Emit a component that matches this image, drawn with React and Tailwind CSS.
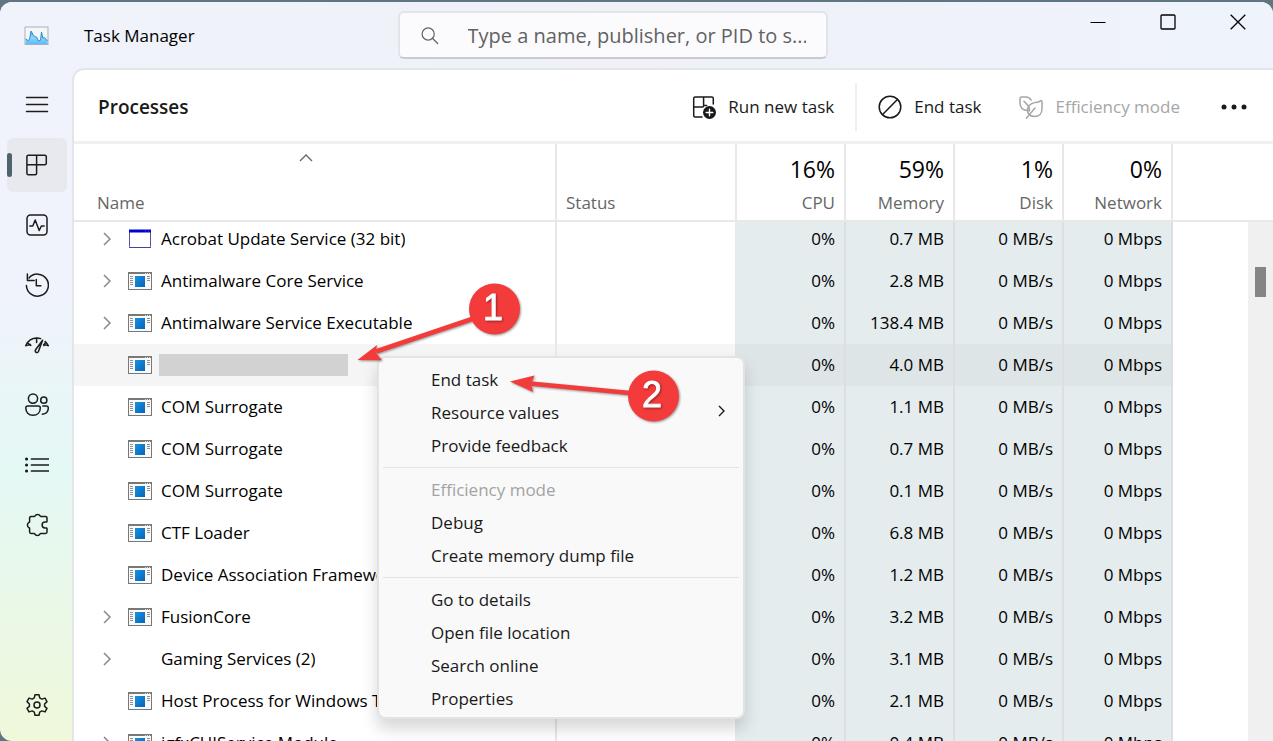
import React, { useState } from 'react';
import { clsx } from 'clsx';

const processes = [
  { name: 'Acrobat Update Service (32 bit)', icon: 'window', group: true, memory: '0.7 MB' },
  { name: 'Antimalware Core Service', icon: 'app', group: true, memory: '2.8 MB' },
  { name: 'Antimalware Service Executable', icon: 'app', group: true, memory: '138.4 MB' },
  { name: '', icon: 'app', memory: '4.0 MB', selected: true },
  { name: 'COM Surrogate', icon: 'app', memory: '1.1 MB' },
  { name: 'COM Surrogate', icon: 'app', memory: '0.7 MB' },
  { name: 'COM Surrogate', icon: 'app', memory: '0.1 MB' },
  { name: 'CTF Loader', icon: 'app', memory: '6.8 MB' },
  { name: 'Device Association Framework', icon: 'app', memory: '1.2 MB' },
  { name: 'FusionCore', icon: 'app', group: true, memory: '3.2 MB' },
  { name: 'Gaming Services (2)', icon: 'none', group: true, memory: '3.1 MB' },
  { name: 'Host Process for Windows Tasks', icon: 'app', memory: '2.1 MB' },
  { name: 'igfxCUIService Module', icon: 'app', group: true, memory: '0.4 MB' },
];

const usage = [
  { label: 'CPU', value: '16%' },
  { label: 'Memory', value: '59%' },
  { label: 'Disk', value: '1%' },
  { label: 'Network', value: '0%' },
];

const menuGroups = [
  [{ label: 'End task' }, { label: 'Resource values', submenu: true }, { label: 'Provide feedback' }],
  [{ label: 'Efficiency mode', disabled: true }, { label: 'Debug' }, { label: 'Create memory dump file' }],
  [{ label: 'Go to details' }, { label: 'Open file location' }, { label: 'Search online' }, { label: 'Properties' }],
];

const Icon = ({ children, size = 24, className }) => (
  <svg
    width={size}
    height={size}
    viewBox="0 0 24 24"
    fill="none"
    stroke="currentColor"
    strokeWidth="1.5"
    strokeLinecap="round"
    strokeLinejoin="round"
    aria-hidden="true"
    className={clsx('shrink-0', className)}
  >
    {children}
  </svg>
);

const navItems = [
  {
    label: 'Processes',
    icon: (
      <path d="M3.2 2.2h16.6a1.5 1.5 0 0 1 1.5 1.5v6.6a1.5 1.5 0 0 1-1.5 1.5H1.9M11.6 2.2v18a1.5 1.5 0 0 1-1.5 1.5H3.4a1.5 1.5 0 0 1-1.5-1.5V3.7a1.5 1.5 0 0 1 1.5-1.5" />
    ),
  },
  {
    label: 'Performance',
    icon: (
      <>
        <rect x="2" y="2" width="20" height="20" rx="3.5" />
        <path d="M4.8 13h3l2.4-6 4 10.5 2.2-4.5h2.8" />
      </>
    ),
  },
  {
    label: 'App history',
    icon: (
      <>
        <path d="M1.4 12.5A11 11 0 1 0 4 5" />
        <path d="M2.4 1v6.6h6.8M11.3 6.4v6.4h4.6" />
      </>
    ),
  },
  {
    label: 'Startup apps',
    icon: (
      <>
        <path d="M.8 12.6C2.8 8 7 5 12 5c1.4 0 2.4.2 3.6.6M20.2 8.6c1.2 1.1 2.2 2.4 3 4" />
        <path d="M1 12.6l4.4-1.2M2.6 10l3.2 2.4M11.6 5.2v4.4M23 12.6l-4.4-1.2M20.4 9.6l-1.6 3" />
        <path d="M17.6 7.2l-7 9.6c-1.4 2 1.5 4 2.8 1.8z" />
      </>
    ),
  },
  {
    label: 'Users',
    icon: (
      <>
        <circle cx="8" cy="5.6" r="4.6" />
        <circle cx="18.8" cy="7.2" r="3.1" />
        <path d="M2.7 13h10.6c1.3 0 2 .8 2 2 0 4.2-2.8 7.3-7.3 7.3S.8 19.2.8 15c0-1.2.7-2 1.9-2z" />
        <path d="M17.8 13h3.6c1.2 0 1.9.8 1.9 1.9 0 3.7-2.3 5.9-6 6.3" />
      </>
    ),
  },
  {
    label: 'Details',
    icon: (
      <>
        <path d="M6.5 6H23.4M6.5 12H23.4M6.5 18H23.4" strokeWidth="1.7" />
        <path d="M1.5 6h.1M1.5 12h.1M1.5 18h.1" strokeWidth="3" />
      </>
    ),
  },
  {
    label: 'Services',
    icon: (
      <path d="M6 3.600h3.200c.3 0 .6-.2.7-.5a3 3 0 0 1 5.400 0c.1.3.4.5.7.5h4.600a1.400 1.400 0 0 1 1.400 1.400v3.400c0 .4-.3.7-.7.7h-1.300a2.900 2.900 0 0 0 0 5.800h1.300c.4 0 .7.3.7.7V19a1.400 1.400 0 0 1-1.400 1.400h-4.800c-.3 0-.6.2-.7.5a3 3 0 0 1-5.400 0c-.1-.3-.4-.5-.7-.5H6A1.400 1.400 0 0 1 4.600 19v-3.500c0-.3-.2-.6-.5-.7a3 3 0 0 1 0-5.400c.3-.1.5-.4.5-.7V5A1.400 1.400 0 0 1 6 3.600z" />
    ),
  },
];

const AppIcon = () => (
  <svg width="24" height="18" viewBox="0 0 24 18" aria-hidden="true" className="block">
    <defs>
      <linearGradient id="appBlue" x1="0" y1="0" x2="1" y2="1">
        <stop offset="0" stopColor="#1993e0" />
        <stop offset="1" stopColor="#0563b8" />
      </linearGradient>
    </defs>
    <rect x=".5" y=".5" width="23" height="17" fill="#fafafa" stroke="#787878" />
    <path d="M0 1h24" stroke="#787874" strokeWidth="2" />
    <path d="M17 1.500h1M19 1.500h1M21 1.500h1" stroke="#ddd" />
    <rect x="7" y="4" width="10" height="11" fill="url(#appBlue)" />
    <path d="M2 4.500h3M2 6.500h3M2 8.500h3M2 10.500h3M2 12.500h3M19 4.500h3M19 6.500h3M19 8.500h3" stroke="#8f8f8f" />
  </svg>
);

const WindowIcon = () => (
  <svg width="24" height="20" viewBox="0 0 24 20" aria-hidden="true" className="block">
    <rect x="1.5" y="1.5" width="21" height="17" rx="1" fill="#fff" stroke="#5552a8" />
    <path d="M1 18.500h22" stroke="#45459a" />
    <path d="M1 2h22" stroke="#0202c8" strokeWidth="3" />
    <path d="M17 2h1M20 2h1" stroke="#3a4cff" />
  </svg>
);

const NavButton = ({ label, active, onClick, children }) => (
  <button
    type="button"
    aria-label={label}
    onClick={onClick}
    className={clsx(
      'relative flex h-[54px] w-[60px] items-center justify-center rounded-md text-[#1c1c1c]',
      active ? 'bg-[#e8e9ee]' : 'hover:bg-black/5'
    )}
  >
    {active && <span className="absolute left-0 h-6 w-[5px] rounded-full bg-[#4f626e]" />}
    {children}
  </button>
);

const TitleBar = () => (
  <header className="flex h-[66px] shrink-0 items-center bg-linear-to-r from-[#f0f3fb] via-[#eff1f7] to-[#eff3fc]">
    <div className="flex flex-1 items-center gap-[35px] pt-0.5 pl-6">
      <svg width="25" height="20" viewBox="0 0 25 20" aria-hidden="true">
        <defs>
          <linearGradient id="chartBlue" x1="0" y1="0" x2="0" y2="1">
            <stop offset="0" stopColor="#3d9fe0" />
            <stop offset=".5" stopColor="#8fd4fb" />
            <stop offset="1" stopColor="#5cbcf8" />
          </linearGradient>
        </defs>
        <rect x="1" y="1" width="23" height="17.5" fill="#f4f6f8" stroke="#a9b1b8" />
        <path
          d="M1.500 13l2.500 1.500 1.500-1L7 5l2 3.500 1.500 2 2 .5 2 4 2-.8L17.500 6l1.300 6 1.700-.5 3 3.500v3h-22z"
          fill="url(#chartBlue)"
        />
        <path
          d="M1.500 13l2.500 1.500 1.500-1L7 5l2 3.500 1.500 2 2 .5 2 4 2-.8L17.500 6l1.300 6 1.700-.5 3 3.500"
          fill="none"
          stroke="#2f90d8"
        />
      </svg>
      <span className="text-[17px]">Task Manager</span>
    </div>

    <label className="mr-[72px] flex h-12 w-[430px] items-center rounded-md border-2 border-[#e2e4ea] border-b-[#c9cbd1] bg-[#fbfbfe] pt-0.5 pr-5 pl-5">
      <Icon size={20} className="text-[#666]">
        <circle cx="9.8" cy="9.6" r="7.3" />
        <path d="M15.200 15l6 6" />
      </Icon>
      <input
        type="text"
        aria-label="Search processes"
        placeholder="Type a name, publisher, or PID to s..."
        className="ml-7 min-w-0 flex-1 bg-transparent text-[20px] outline-none placeholder:text-[#626262]"
      />
    </label>

    <div className="flex flex-1 justify-end self-start">
      <button type="button" aria-label="Minimize" className="flex h-10 w-[70px] items-center justify-center">
        <svg width="16" height="16" viewBox="0 0 16 16" stroke="#000">
          <path d="M.5 8.500h15" />
        </svg>
      </button>
      <button type="button" aria-label="Maximize" className="flex h-10 w-[70px] items-center justify-center">
        <svg width="16" height="16" viewBox="0 0 16 16" fill="none" stroke="#000" strokeWidth="1.3">
          <rect x="1" y="1" width="14" height="14" rx="1" />
        </svg>
      </button>
      <button type="button" aria-label="Close" className="flex h-10 w-[70px] items-center justify-center">
        <svg width="16" height="16" viewBox="0 0 16 16" stroke="#000" strokeWidth="1.3">
          <path d="M.7.7l14.600 14.600M15.300.7L.7 15.300" />
        </svg>
      </button>
    </div>
  </header>
);

const Toolbar = () => (
  <div className="flex h-[74px] shrink-0 items-center border-b-3 border-[#f0f0f1] pt-0.5 pr-[23px] pl-6">
    <h1 className="flex-1 pt-0.5 text-[19px] font-semibold text-[#1a1a1a]">Processes</h1>
    <button type="button" className="flex items-center gap-3 text-[17px] text-[#1a1a1a]">
      <Icon>
        <path d="M10 22H3.200a1.500 1.500 0 0 1-1.500-1.500v-17A1.500 1.500 0 0 1 3.200 2h16.600a1.500 1.500 0 0 1 1.500 1.500V9M1.700 12h8.600a1.300 1.300 0 0 0 1.300-1.300V2M11.600 10.500h3" />
        <circle cx="17.5" cy="17.5" r="6.5" fill="currentColor" stroke="none" />
        <path d="M17.500 14.200v6.600M14.200 17.500h6.600" stroke="#fff" strokeWidth="1.4" />
      </Icon>
      Run new task
    </button>
    <span className="mx-[21px] h-12 w-0.5 bg-[#efefef]" />
    <button type="button" className="flex items-center gap-3 text-[17px] text-[#1a1a1a]">
      <Icon>
        <circle cx="12" cy="12" r="10.8" />
        <path d="M4.600 19.600L19.400 4.400" />
      </Icon>
      End task
    </button>
    <button type="button" disabled className="ml-[38px] flex items-center gap-3 text-[17px] text-[#a6a6a6]">
      <Icon>
        <path d="M9 15.500C4 15.500 1 12.500 1 7.500V3.600C1 2.700 1.600 2 2.600 2h4.200c2.500 0 4.300 1.200 5.400 3.200M5 6.200l4 4.400c1.500 1.600 1.700 3 1.300 5.400" />
        <path d="M10.300 20c-2.200-2.600-2.200-6.300-.4-9C12 8 15 7.400 18.500 7.200c1.400-.1 2-.5 2.800-1.300.8-.7 1.700-.3 1.700.7v6.900c0 5-2.900 8-7.200 8-2.200 0-4.100-.7-5.500-1.500zM7.400 23.200L16 13" />
      </Icon>
      Efficiency mode
    </button>
    <button type="button" aria-label="More options" className="ml-[38px] flex w-8 justify-center">
      <svg width="26" height="6" viewBox="0 0 26 6" fill="#1a1a1a">
        <circle cx="3" cy="3" r="2.5" />
        <circle cx="13" cy="3" r="2.5" />
        <circle cx="23" cy="3" r="2.5" />
      </svg>
    </button>
  </div>
);

const ProcessTable = () => (
  <table className="w-full table-fixed border-separate border-spacing-0 text-[17px]">
    <colgroup>
      <col className="w-[481px]" />
      <col className="w-[180px]" />
      <col className="w-[109px]" />
      <col className="w-[109px]" />
      <col className="w-[109px]" />
      <col className="w-[109px]" />
      <col />
    </colgroup>
    <thead className="text-[#666]">
      <tr className="h-[78px]">
        <th className="border-b-2 border-[#e8e8e8] p-0 text-left font-normal">
          <button type="button" className="flex h-[76px] w-full flex-col items-start justify-between pt-2 pb-[5px] pl-[23px]">
            <svg width="14" height="12" viewBox="0 0 14 12" fill="none" stroke="#666" strokeWidth="1.3" className="mr-10 self-center">
              <path d="M1 9l6-6 6 6" />
            </svg>
            <span className="leading-6">Name</span>
          </button>
        </th>
        <th className="border-b-2 border-l-2 border-[#e8e8e8] p-0 pb-[5px] pl-[9px] text-left align-bottom leading-6 font-normal">
          Status
        </th>
        {usage.map((col) => (
          <th key={col.label} className="border-b-2 border-l-2 border-[#e8e8e8] p-0 pr-[9px] pb-[5px] text-right align-bottom font-normal">
            <div className="mb-1.5 text-[23px] leading-8 text-black">{col.value}</div>
            <div className="leading-6">{col.label}</div>
          </th>
        ))}
        <th className="border-b-2 border-l-2 border-[#e8e8e8] p-0" />
      </tr>
    </thead>
    <tbody className="text-black">
      {processes.map((proc, i) => {
        // first row is scrolled slightly under the header
        const row = i === 0 ? 'h-[38px] pb-1' : 'h-[42px]';
        const plain = proc.selected ? 'bg-[#f5f5f5]' : 'bg-white';
        const heat = proc.selected ? 'bg-[#dee5e7]' : 'bg-[#e4ecee]';
        return (
          <tr key={i}>
            <td className={clsx('p-0 pl-[23px]', row, plain)}>
              <div className="flex items-center">
                <span className="mr-[11px] flex w-5 justify-center">
                  {proc.group && (
                    <button type="button" aria-label={`Expand ${proc.name}`}>
                      <svg width="8" height="14" viewBox="0 0 8 14" fill="none" stroke="#888" strokeWidth="1.5" className="block">
                        <path d="M1 1l6 6-6 6" />
                      </svg>
                    </button>
                  )}
                </span>
                <span className="mr-[9px] w-6 shrink-0">
                  {proc.icon === 'app' && <AppIcon />}
                  {proc.icon === 'window' && <WindowIcon />}
                </span>
                {proc.name ? (
                  <span className="truncate leading-6">{proc.name}</span>
                ) : (
                  <span className="-ml-0.5 h-[22px] w-[189px] bg-[#d2d2d2]" />
                )}
              </div>
            </td>
            <td className={clsx('border-l-2 border-[#e8e8e8] p-0', row, plain)} />
            {['0%', proc.memory, '0 MB/s', '0 Mbps'].map((value, c) => (
              <td
                key={c}
                className={clsx(
                  'border-l-2 p-0 pr-[9px] text-right leading-6 whitespace-nowrap',
                  c === 0 ? 'border-transparent' : 'border-[#dbdfe1]',
                  row,
                  heat
                )}
              >
                {value}
              </td>
            ))}
            <td className={clsx('border-l-2 border-[#dbdfe1] bg-white p-0', row)} />
          </tr>
        );
      })}
    </tbody>
  </table>
);

const ContextMenu = () => (
  <div
    role="menu"
    className="absolute top-[286px] left-[303px] w-[368px] rounded-lg border-2 border-[#e3e3e3] bg-[#f9f9f9] pt-[5px] pb-0.5 text-[17px] text-[#1a1a1a] shadow-[0_10px_16px_rgba(0,0,0,0.16)]"
  >
    {menuGroups.map((group, i) => (
      <div key={i}>
        {i > 0 && <div className="mx-1 my-[5px] h-px bg-[#e3e3e3]" />}
        {group.map((item) => (
          <button
            key={item.label}
            type="button"
            role="menuitem"
            disabled={item.disabled}
            className="flex h-[33px] w-full items-center justify-between pr-[18px] pl-[52px] hover:bg-black/5 disabled:text-[#a3a3a3]"
          >
            {item.label}
            {item.submenu && (
              <svg width="7" height="12" viewBox="0 0 7 12" fill="none" stroke="#1a1a1a" strokeWidth="1.4" className="mb-1">
                <path d="M1 1l5 5-5 5" />
              </svg>
            )}
          </button>
        ))}
      </div>
    ))}
  </div>
);

// Numbered step markers with arrows
const Callouts = () => (
  <svg
    width="350"
    height="170"
    viewBox="350 270 350 170"
    className="pointer-events-none absolute top-[200px] left-[276px] font-['Liberation_Sans',Arial,sans-serif]"
  >
    <g fill="#f33b3b" style={{ filter: 'drop-shadow(1px 1px 1px rgba(0,0,0,0.4))' }}>
      <path d="M472 319L376 351.500" stroke="#f33b3b" strokeWidth="4.6" />
      <path d="M357.500 360l19.500-15-1.500 7.500 6.500 7.700z" />
      <path d="M630 393L530 383.500" stroke="#f33b3b" strokeWidth="4.6" />
      <path d="M510 381.500l24.500-6-3.500 8 2 8.500z" />
      <circle cx="494.5" cy="309" r="25.5" />
      <circle cx="653.5" cy="396" r="25.5" />
    </g>
    <g
      fill="#fff"
      stroke="#fff"
      strokeWidth="0.8"
      fontSize="36"
      textAnchor="middle"
      style={{ filter: 'drop-shadow(1px 1px 1px rgba(0,0,0,0.4))' }}
    >
      <text x="493" y="320">1</text>
      <text x="652" y="407">2</text>
    </g>
  </svg>
);

const App = () => {
  const [page, setPage] = useState('Processes');

  return (
    <div className="h-screen bg-[#5f7682] pt-0.5 font-['Open_Sans','Segoe_UI',sans-serif] text-black">
      <div className="flex h-full flex-col overflow-hidden rounded-t-xl rounded-bl-xl bg-linear-to-b from-[#f0f3fb] from-40% via-[#e4f8f5] via-63% to-[#eff8da]">
        <TitleBar />
        <div className="flex min-h-0 flex-1">
          <nav className="flex w-[72px] shrink-0 flex-col items-center gap-1.5 pt-[10px] pb-[9px] pl-0.5">
            <NavButton label="Open navigation">
              <Icon>
                <path d="M1.500 4.500h21M1.500 11.500h21M1.500 18.500h21" />
              </Icon>
            </NavButton>
            {navItems.map((item) => (
              <NavButton key={item.label} label={item.label} active={page === item.label} onClick={() => setPage(item.label)}>
                <Icon>{item.icon}</Icon>
              </NavButton>
            ))}
            <div className="flex-1" />
            <NavButton label="Settings">
              <Icon>
                <path d="M10 1.700h4l.7 3.200 2.100 1.200 3.200-1 2 3.500L19.600 11v2.400l2.400 2-2 3.500-3.200-1-2.100 1.200-.7 3.200h-4l-.7-3.200-2.100-1.200-3.200 1-2-3.500 2.400-2V11L2 8.600l2-3.500 3.200 1 2.100-1.200z" />
                <circle cx="12" cy="12" r="3" />
              </Icon>
            </NavButton>
          </nav>
          <main className="relative flex min-w-0 flex-1 flex-col rounded-tl-xl border-t-2 border-l-2 border-[#e2e5ea] bg-white">
            <Toolbar />
            <div className="relative min-h-0 flex-1 overflow-hidden">
              <ProcessTable />
              {/* Scrollbar */}
              <div className="absolute top-[78px] right-0 bottom-0 w-[25px] bg-[#f0f0f0] px-[7px] pt-[45px]">
                <div className="h-[30px] bg-[#858585]" />
              </div>
            </div>
            <ContextMenu />
            <Callouts />
          </main>
        </div>
      </div>
    </div>
  );
};

export default App;
